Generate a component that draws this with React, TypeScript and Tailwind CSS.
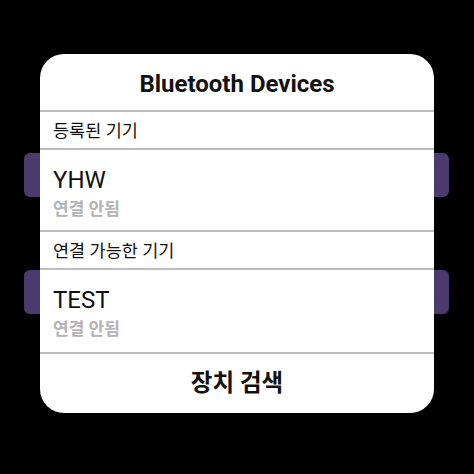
import type { ReactElement } from "react";

const latin = "font-['Roboto','Noto_Sans_CJK_KR',sans-serif]";

function Divider(): ReactElement {
  return <div className="h-[2px] w-full bg-[#bdbdbd]" />;
}

function SectionHeader({ label }: { label: string }): ReactElement {
  return (
    <div className="flex h-[36px] items-center px-[13px] pt-[1px] text-[17.5px] leading-[20px] text-[#111]">
      {label}
    </div>
  );
}

function DeviceRow({ name, status, extra }: { name: string; status: string; extra?: boolean }): ReactElement {
  return (
    <div className={extra === true ? "px-[13px] pb-[13px] pt-[17px]" : "px-[13px] pb-[11px] pt-[17px]"}>
      <div className="text-[24px] leading-[26px] text-[#111]">{name}</div>
      <div className="mt-[6px] text-[17px] font-bold leading-[20px] text-[#b3b3b3]">{status}</div>
    </div>
  );
}

export default function App(): ReactElement {
  return (
    <div className={`relative h-[474px] w-[474px] overflow-hidden bg-black ${latin}`}>
      {/* list rows behind the dialog */}
      <div className="absolute left-[24px] top-[153px] h-[44px] w-[425px] rounded-[6px] bg-[#4b3a6e]" />
      <div className="absolute left-[24px] top-[270px] h-[44px] w-[425px] rounded-[6px] bg-[#4b3a6e]" />

      <div className="relative ml-[40px] mt-[54px] w-[394px] overflow-hidden rounded-[24px] bg-white">
        <div className="flex h-[56px] items-center justify-center pt-[4px] text-[24px] font-bold text-[#111]">
          Bluetooth Devices
        </div>
        <Divider />
        <SectionHeader label="등록된 기기" />
        <Divider />
        <DeviceRow name="YHW" status="연결 안됨" />
        <Divider />
        <SectionHeader label="연결 가능한 기기" />
        <Divider />
        <DeviceRow name="TEST" status="연결 안됨" extra />
        <Divider />
        <div className="flex h-[59px] items-center justify-center text-[23.5px] font-bold text-[#111]">
          장치 검색
        </div>
      </div>
    </div>
  );
}
